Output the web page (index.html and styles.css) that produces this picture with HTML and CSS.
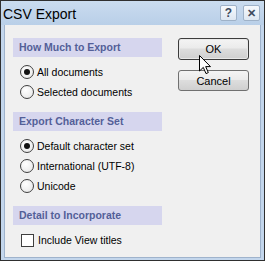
FILE: index.html
```html
<!DOCTYPE html>
<html>
<head>
  <meta charset="UTF-8">
  <title>CSV Export</title>
  <link rel="stylesheet" href="styles.css">
</head>
<body>
  <div class="window">
    <div class="titlebar">
      <span class="title">CSV Export</span>
      <span class="cap_btn">?</span>
      <span class="cap_btn cap_close">&#x2715;</span>
    </div>

    <div class="client">
      <div class="options">
        <div class="group_head">How Much to Export</div>
        <div class="opt"><span class="radio on"></span>All documents</div>
        <div class="opt"><span class="radio"></span>Selected documents</div>

        <div class="group_head">Export Character Set</div>
        <div class="opt"><span class="radio on"></span>Default character set</div>
        <div class="opt"><span class="radio"></span>International (UTF-8)</div>
        <div class="opt"><span class="radio"></span>Unicode</div>

        <div class="group_head">Detail to Incorporate</div>
        <div class="opt"><span class="check"></span>Include View titles</div>
      </div>

      <div class="buttons">
        <button class="btn btn_default">OK</button>
        <button class="btn">Cancel</button>
      </div>
    </div>

    <!-- mouse pointer over OK -->
    <svg class="cursor" width="13" height="20" viewBox="0 0 13 20">
      <path d="M0.5 0.5 L0.5 16 L4.3 12.4 L7 18.6 L9.3 17.6 L6.7 11.6 L11.5 11.6 Z" fill="#fff" stroke="#000" stroke-width="1" stroke-linejoin="miter"/>
    </svg>
  </div>
</body>
</html>
```

FILE: styles.css
```css
body {
  margin: 0;
  font-family: "Liberation Sans", Arial, sans-serif;
  background: #fff;
}
.window {
  position: relative;
  width: 265px;
  height: 261px;
  box-sizing: border-box;
  border: 1px solid #2f2f2f;
  background: #c3d6ec;
  padding: 0 3px 2px 3px;
  display: flex;
  flex-direction: column;
}
.titlebar {
  height: 24px;
  margin: 0 -3px;
  padding: 0 4px 0 2px;
  display: flex;
  align-items: center;
  background: linear-gradient(#cadcef, #b9cfe8);
}
.title {
  flex: 1;
  font-size: 14px;
  color: #000;
  padding-top: 1px;
}
.cap_btn {
  width: 15px;
  height: 14px;
  margin-left: 7px;
  border: 1px solid #9fb2c8;
  border-radius: 2px;
  background: linear-gradient(#f6f9fc, #dde7f2);
  font-size: 12px;
  font-weight: bold;
  color: #3d4b5e;
  text-align: center;
  line-height: 14px;
}
.cap_close {
  margin-left: 6px;
  font-size: 11px;
}
.client {
  flex: 1;
  background: #f0f0f0;
  border: 1px solid #9fb3cc;
  border-top: none;
  display: flex;
  padding: 13px 0 0 8px;
}
.options {
  width: 149px;
}
.group_head {
  height: 19px;
  line-height: 19px;
  padding-left: 6px;
  background: #d6d6ee;
  color: #535f98;
  font-size: 10.5px;
  font-weight: bold;
  margin-bottom: 5px;
}
.opt + .group_head {
  margin-top: 10px;
}
.opt {
  height: 20px;
  display: flex;
  align-items: center;
  font-size: 10.5px;
  color: #000;
}
.radio {
  width: 12px;
  height: 12px;
  margin: 0 3px 0 7px;
  border: 1px solid #3f3f3f;
  border-radius: 50%;
  background: radial-gradient(circle at 40% 35%, #ffffff, #e4e4e4);
  position: relative;
}
.radio.on::after {
  content: "";
  position: absolute;
  left: 3px;
  top: 3px;
  width: 6px;
  height: 6px;
  border-radius: 50%;
  background: #111;
}
.check {
  width: 11px;
  height: 11px;
  margin: 0 4px 0 8px;
  border: 1px solid #3f3f3f;
  background: #fff;
}
.buttons {
  margin-left: 16px;
  display: flex;
  flex-direction: column;
  gap: 10px;
}
.btn {
  width: 71px;
  height: 21px;
  padding: 0;
  border: 1px solid #707070;
  border-radius: 3px;
  background: linear-gradient(#f4f4f4 0%, #ebebeb 45%, #dddddd 50%, #cfcfcf 100%);
  font-family: "Liberation Sans", Arial, sans-serif;
  font-size: 11px;
  color: #000;
}
.btn_default {
  height: 22px;
  border-color: #3c3c3c;
  box-shadow: inset 0 0 0 1px #e8e8e8;
}
.cursor {
  position: absolute;
  left: 198px;
  top: 54px;
}
```
